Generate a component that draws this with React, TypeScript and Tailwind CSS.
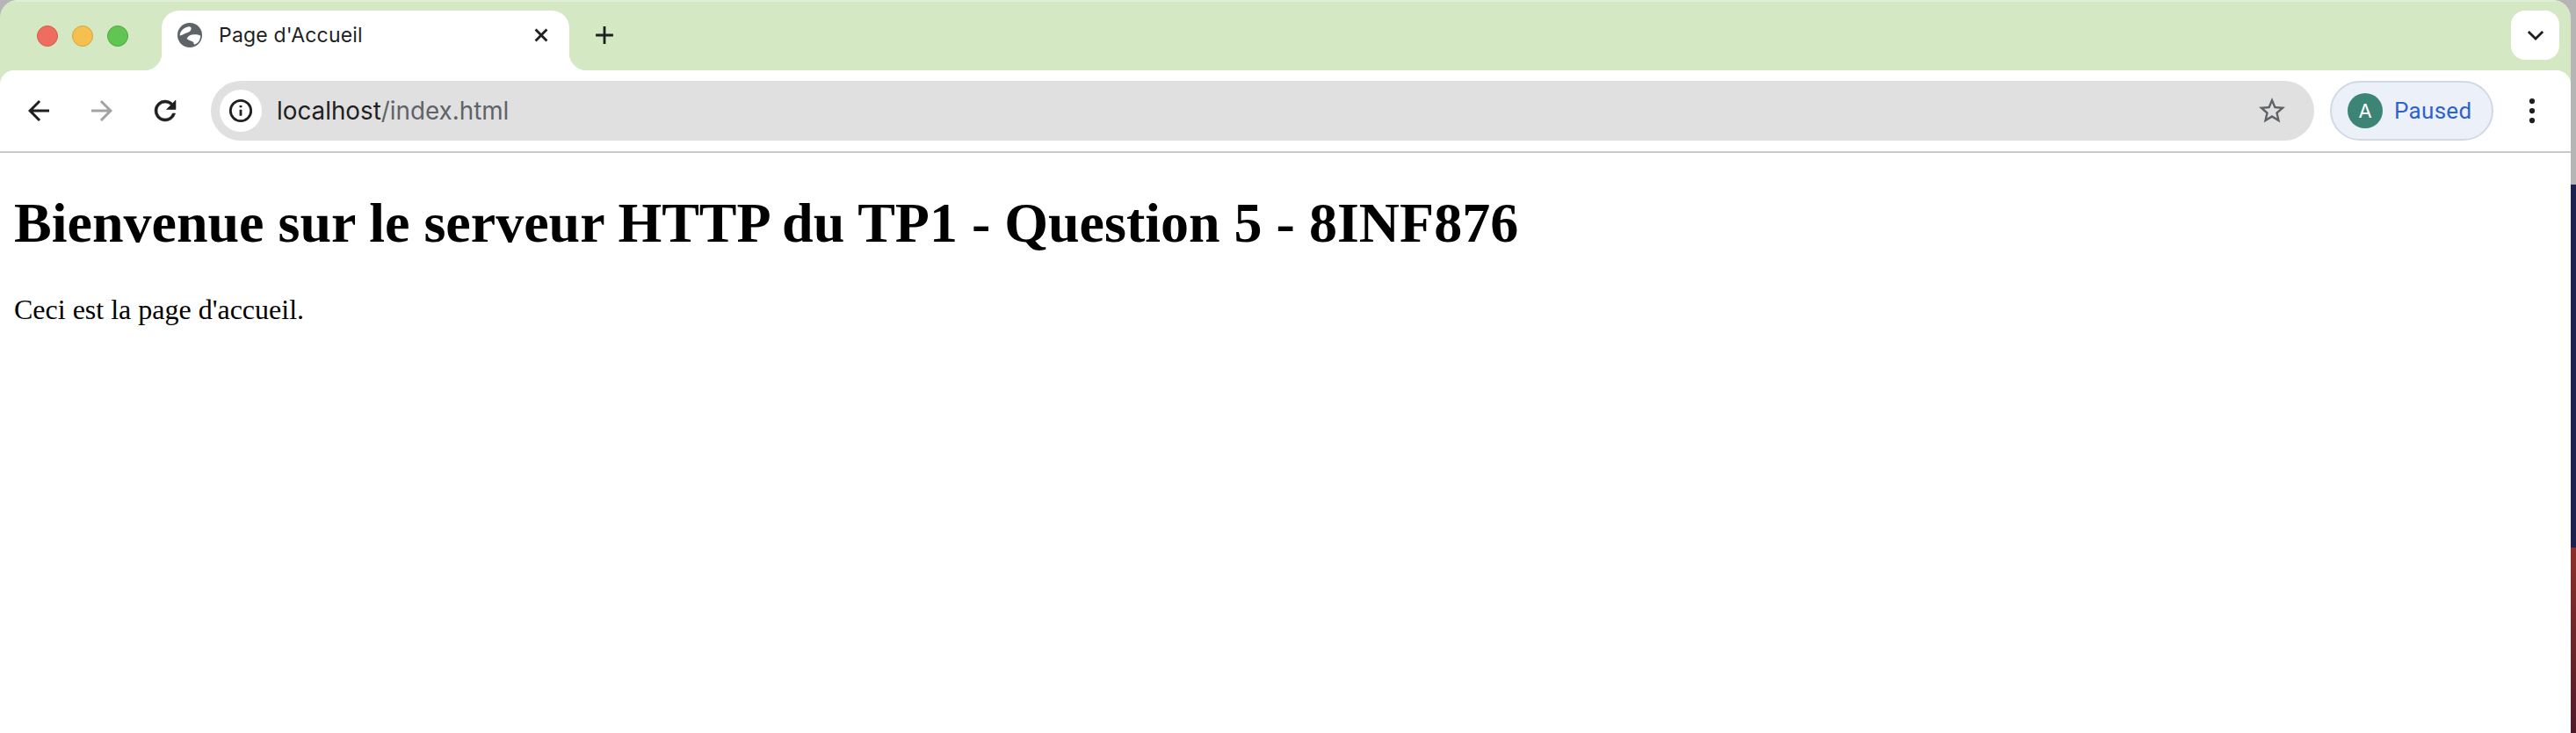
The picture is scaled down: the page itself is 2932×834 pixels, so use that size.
import React from 'react';

const ui = "font-['Inter','Liberation_Sans',sans-serif]";

const App: React.FC = () => {
  return (
    <div className="flex h-[834px] w-[2932px] overflow-hidden bg-[#b5b5b5]">
      <div className="flex h-full w-[2926px] shrink-0 flex-col overflow-hidden rounded-t-[20px] bg-[#d4e8c4]">
        {/* Tab strip */}
        <div className="flex h-[80px] shrink-0 items-start border-t-2 border-[#e1eed6] pt-[10px]">
          <div className="ml-[42px] mt-[17px] flex h-[24px] shrink-0 items-center gap-[16px]">
            <span className="h-6 w-6 rounded-full border border-[#d9574c] bg-[#ef6c60]" />
            <span className="h-6 w-6 rounded-full border border-[#d9a23c] bg-[#f5c04f]" />
            <span className="h-6 w-6 rounded-full border border-[#4aa83c] bg-[#61c554]" />
          </div>
          <div className="relative ml-[38px] flex h-[68px] w-[464px] shrink-0 items-start rounded-t-[20px] bg-white pl-[18px] pt-[14px]">
            <svg viewBox="0 0 24 24" className="h-[28px] w-[28px] shrink-0" fill="none">
              <circle cx="12" cy="12" r="12" fill="#5f6368" />
              <path d="M2.2 12.4C2.4 8.6 5.4 4.8 10.4 3.8c1.6-.3 3.2.4 3 1.9-.2 1.8-1.6 3.1-4 3.9-2.4.8-4.4 2.4-7.2 2.8z" fill="white" />
              <path d="M9.1 15.4c1.2-2 2.6-3.6 5-3.8 2.8-.3 5.8-.4 8.4 1-.2 2.4-.8 4.4-2 5.8-1.2 1.4-2.6 2.4-4.2 2.8-.6-1.2-.4-2.4-1.2-2.8-1.4-.8-3.6-.8-6-3z" fill="white" />
            </svg>
            <span className={`${ui} ml-[19px] -mt-[1px] whitespace-nowrap text-[23px] leading-[30px] tracking-[.2px] text-[#1f1f1f]`}>Page d'Accueil</span>
            <svg viewBox="0 0 24 24" className="absolute left-[418px] top-[14px] h-[28px] w-[28px] text-[#1f1f1f]" fill="none" stroke="currentColor" strokeWidth="2.4">
              <path d="M6.5 6.5l11 11M17.5 6.5l-11 11" />
            </svg>
            <span className="absolute -left-[20px] bottom-0 h-[20px] w-[20px] bg-[radial-gradient(circle_at_0_0,transparent_20px,white_20.5px)]" />
            <span className="absolute -right-[20px] bottom-0 h-[20px] w-[20px] bg-[radial-gradient(circle_at_100%_0,transparent_20px,white_20.5px)]" />
          </div>
          <svg viewBox="0 0 24 24" className="ml-[26px] mt-[14px] h-[28px] w-[28px] shrink-0 text-[#1f1f1f]" fill="none" stroke="currentColor" strokeWidth="2.4">
            <path d="M12 3.5v17M3.5 12h17" />
          </svg>
          <div className="ml-auto mr-[13px] flex h-[56px] w-[55px] shrink-0 items-center justify-center rounded-[16px] bg-white">
            <svg viewBox="0 0 24 24" className="h-[28px] w-[28px] text-[#1f1f1f]" fill="none" stroke="currentColor" strokeWidth="2.4">
              <path d="M5 8.5l7 7 7-7" />
            </svg>
          </div>
        </div>
        {/* Toolbar */}
        <div className="flex h-[94px] shrink-0 items-start rounded-t-[16px] border-b-2 border-[#c9c9c9] bg-white pt-3">
          <svg viewBox="0 0 24 24" className="ml-[26px] mt-[16px] h-[36px] w-[36px] shrink-0 text-[#1f1f1f]" fill="currentColor">
            <path d="M20 11H7.83l5.59-5.59L12 4l-8 8 8 8 1.41-1.41L7.83 13H20v-2z" />
          </svg>
          <svg viewBox="0 0 24 24" className="ml-[36px] mt-[16px] h-[36px] w-[36px] shrink-0 text-[#a3a3a3]" fill="currentColor">
            <path d="M12 4l-1.41 1.41L16.17 11H4v2h12.17l-5.58 5.59L12 20l8-8z" />
          </svg>
          <svg viewBox="0 0 24 24" className="ml-[36px] mt-[16px] h-[36px] w-[36px] shrink-0 text-[#1f1f1f]" fill="currentColor" stroke="currentColor" strokeWidth="0.4">
            <path d="M17.65 6.35A7.96 7.96 0 0 0 12 4a8 8 0 1 0 7.73 10h-2.08A6 6 0 1 1 12 6c1.66 0 3.14.69 4.22 1.78L13 11h7V4l-2.35 2.35z" />
          </svg>
          <div className="ml-[34px] flex h-[68px] w-[2394px] shrink-0 items-center rounded-full bg-[#e0e0e0] pl-[10px] pr-[30px]">
            <div className="flex h-[48px] w-[48px] shrink-0 items-center justify-center rounded-full bg-white">
              <svg viewBox="0 0 24 24" className="h-[28px] w-[28px] shrink-0 text-[#1f1f1f]" fill="none" stroke="currentColor" strokeWidth="2.4">
                <circle cx="12" cy="12" r="10" />
                <path d="M12 11v6M12 6.8v2" />
              </svg>
            </div>
            <span className={`${ui} ml-[17px] whitespace-nowrap text-[27.8px] leading-[32px] text-[#1f1f1f]`}>
              localhost<span className="text-[#5f6368]">/index.html</span>
            </span>
            <svg viewBox="0 0 24 24" className="ml-auto h-[36px] w-[36px] shrink-0 text-[#5f6368]" fill="currentColor">
              <path d="M22 9.24l-7.19-.62L12 2 9.19 8.63 2 9.24l5.46 4.73L5.82 21 12 17.27 18.18 21l-1.63-7.03L22 9.24zM12 15.4l-3.76 2.27 1-4.28-3.32-2.88 4.38-.38L12 6.1l1.71 4.04 4.38.38-3.32 2.88 1 4.28L12 15.4z" />
            </svg>
          </div>
          <div className="ml-[18px] flex h-[68px] w-[186px] shrink-0 items-center rounded-full border-2 border-[#d3d9e3] bg-[#ecf1f9] pl-[18px]">
            <span className={`${ui} flex h-[40px] w-[40px] items-center justify-center rounded-full bg-[#3c8576] text-[22px] text-white`}>A</span>
            <span className="ml-[13px] font-['Roboto',sans-serif] text-[26px] leading-[30px] tracking-[.3px] text-[#2f62d0]">Paused</span>
          </div>
          <svg viewBox="0 0 24 24" className="ml-[29px] mt-[19px] h-[30px] w-[30px] shrink-0 text-[#1f1f1f]" fill="currentColor">
            <circle cx="12" cy="3.2" r="2.5" />
            <circle cx="12" cy="12" r="2.5" />
            <circle cx="12" cy="20.8" r="2.5" />
          </svg>
        </div>
        {/* Page */}
        <div className="grow bg-white pl-4 font-['Liberation_Serif',serif] text-black">
          <h1 className="mt-[43px] whitespace-nowrap text-[64px] font-bold leading-[74px]">Bienvenue sur le serveur HTTP du TP1 - Question 5 - 8INF876</h1>
          <p className="mt-[43px] text-[32px] leading-[37px]">Ceci est la page d'accueil.</p>
        </div>
      </div>
      {/* Desktop behind the window */}
      <div className="flex h-full w-[6px] shrink-0 flex-col">
        <div className="h-[210px] bg-[#b5b5b5]" />
        <div className="h-[413px] bg-[#1d2150]" />
        <div className="grow bg-gradient-to-b from-[#8c3028] to-[#4f1a28]" />
      </div>
    </div>
  );
};

export default App;
